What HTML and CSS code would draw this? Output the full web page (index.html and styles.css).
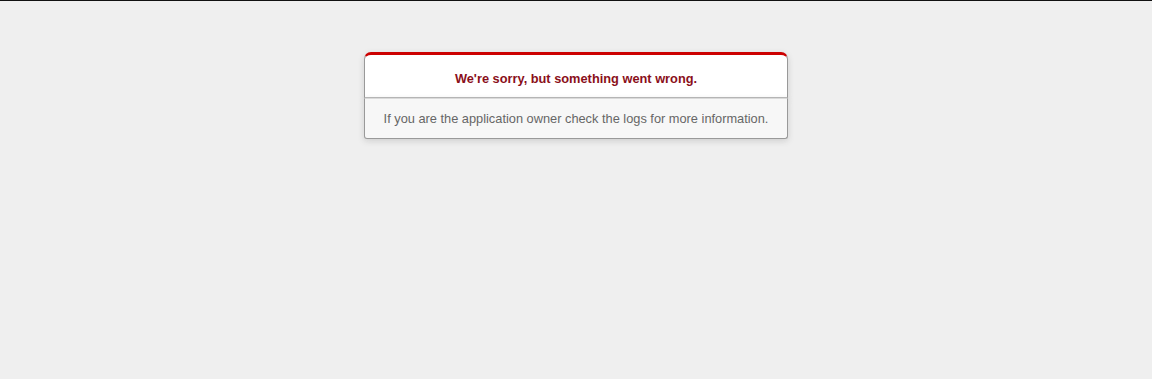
FILE: index.html
```html
<!DOCTYPE html>
<html>
<head>
    <meta charset="UTF-8">
    <meta name="viewport" content="width=device-width, initial-scale=1.0">
    <title>We're sorry, but something went wrong (500)</title>
    <link rel="stylesheet" href="styles.css">
</head>
<body>
    <div class="topline"></div>
    <div class="dialog">
        <div>
            <h1>We're sorry, but something went wrong.</h1>
        </div>
        <p>If you are the application owner check the logs for more information.</p>
    </div>
</body>
</html>
```

FILE: styles.css
```css
body {
    background-color: #EFEFEF;
    color: #2E2F30;
    text-align: center;
    font-family: "Liberation Sans", Arial, sans-serif;
    font-size: 12.8px;
    margin: 0;
}
.topline {
    height: 1px;
    background-color: #111;
}
.dialog {
    width: 424px;
    margin: 51px auto 0;
}
.dialog > div {
    border: 1px solid #CCC;
    border-right-color: #999;
    border-left-color: #999;
    border-bottom-color: #BBB;
    border-top: #CC0000 solid 3px;
    border-top-left-radius: 7px;
    border-top-right-radius: 7px;
    background-color: white;
    padding: 6px 12% 0;
    box-shadow: 0 2px 6px rgba(50, 50, 50, 0.17);
}
h1 {
    font-size: 100%;
    color: #8A0F1A;
    line-height: 1.5em;
    margin: 8px 0 9px;
}
.dialog > p {
    margin: 0 0 1em;
    padding: 12px 1em 12px;
    background-color: #F7F7F7;
    border: 1px solid #CCC;
    border-right-color: #999;
    border-left-color: #999;
    border-bottom-color: #999;
    border-bottom-left-radius: 3px;
    border-bottom-right-radius: 3px;
    border-top-color: #DADADA;
    color: #666;
    box-shadow: 0 2px 6px rgba(50, 50, 50, 0.17);
}
```
